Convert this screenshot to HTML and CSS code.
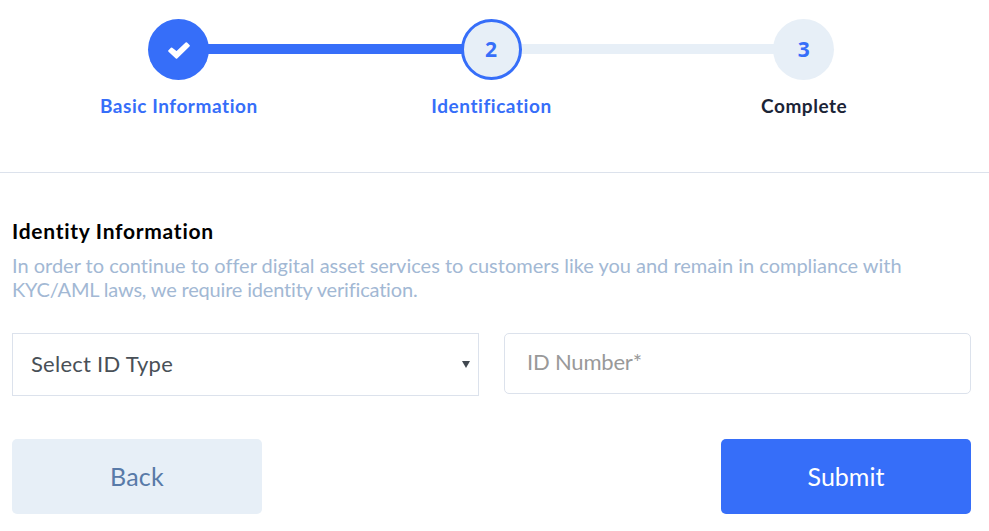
FILE: index.html
```html
<!DOCTYPE html>
<html lang="en">
<head>
    <meta charset="UTF-8">
    <title>Identity Verification</title>
    <link rel="stylesheet" href="styles.css">
</head>
<body>
    <ul class="steps">
        <li class="step done">
            <div class="step-track">
                <span class="step-line hidden"></span>
                <span class="step-circle">
                    <svg class="step-check" viewBox="0 0 22 17" width="22" height="17">
                        <path d="M1.2 8.9 3.6 6.5 8.5 10.4 18.3 1.2 20.8 3.8 8.5 15.7Z" fill="#fff" stroke="#fff" stroke-width="2" stroke-linejoin="round"/>
                    </svg>
                </span>
                <span class="step-line filled"></span>
            </div>
            <div class="step-label">Basic Information</div>
        </li>
        <li class="step active">
            <div class="step-track">
                <span class="step-line filled"></span>
                <span class="step-circle">2</span>
                <span class="step-line"></span>
            </div>
            <div class="step-label">Identification</div>
        </li>
        <li class="step">
            <div class="step-track">
                <span class="step-line"></span>
                <span class="step-circle">3</span>
                <span class="step-line hidden"></span>
            </div>
            <div class="step-label">Complete</div>
        </li>
    </ul>

    <form class="identity-form">
        <h2 class="section-title">Identity Information</h2>
        <p class="section-text">In order to continue to offer digital asset services to customers like you and remain in compliance with<br><span class="law-text">KYC/AML laws, we require identity verification.</span></p>

        <div class="fields">
            <div class="select-wrap">
                <select class="select" id="idType">
                    <option>Select ID Type</option>
                </select>
                <span class="select-arrow"></span>
            </div>
            <input class="input" id="idNumber" type="text" placeholder="ID Number*">
        </div>

        <div class="buttons">
            <button class="button back" type="button">Back</button>
            <button class="button submit" type="submit">Submit</button>
        </div>
    </form>
</body>
</html>
```

FILE: styles.css
```css
* {
    box-sizing: border-box;
}
body {
    font-family: Lato, "Liberation Sans", sans-serif;
    font-variant-ligatures: none;
    margin: 0;
    background-color: #fff;
}

.steps {
    list-style: none;
    display: flex;
    height: 173px;
    margin: 0;
    padding: 19px 29px 0 22px;
    border-bottom: 1px solid #dce2ec;
}
.step {
    flex: 1;
    color: #1b2437;
}
.step-track {
    display: flex;
    align-items: center;
}
.step-line {
    flex: 1;
    height: 10px;
    margin-bottom: 1px;
    background-color: #e7eff7;
}
.step-line.filled {
    background-color: #366ef9;
}
.step-line.hidden {
    visibility: hidden;
}
.step-circle {
    display: flex;
    align-items: center;
    justify-content: center;
    width: 61px;
    height: 61px;
    margin: 0 -1px;
    padding-bottom: 1px;
    border-radius: 50%;
    background-color: #e7eff7;
    color: #366ef9;
    font-family: "Open Sans", Lato, sans-serif;
    font-size: 21px;
    font-weight: bold;
    z-index: 1;
}
.step.done .step-circle {
    background-color: #366ef9;
}
.step.active .step-circle {
    border: 3px solid #366ef9;
}
.step-check {
    margin: 3px 0 0 1px;
}
.step-label {
    margin-top: 14px;
    padding-left: 1px;
    font-size: 19px;
    line-height: 24px;
    font-weight: bold;
    letter-spacing: 0.55px;
    text-align: center;
}
.step.done .step-label,
.step.active .step-label {
    color: #366ef9;
}

.identity-form {
    padding: 45px 18px 0 12px;
}
.section-title {
    margin: 0 0 9px;
    font-size: 21px;
    line-height: 26px;
    font-weight: bold;
    letter-spacing: 0.72px;
    color: #000;
}
.section-text {
    margin: 0 0 32px;
    font-size: 20px;
    line-height: 24px;
    letter-spacing: -0.01px;
    color: #a2b8d4;
    white-space: nowrap;
}
.law-text {
    letter-spacing: -0.18px;
}

.fields {
    display: grid;
    grid-template-columns: 1fr 1fr;
    align-items: start;
    gap: 25px;
}
.select-wrap {
    display: flex;
    align-items: center;
    height: 63px;
    padding: 0 8px 0 18px;
    border: 1px solid #dce2ec;
}
.select {
    flex: 1;
    height: 100%;
    padding: 0 0 2px;
    border: none;
    background: none;
    appearance: none;
    font-family: inherit;
    font-size: 22px;
    letter-spacing: 0.25px;
    color: #495057;
}
.select-arrow {
    border: 4px solid transparent;
    border-top: 7px solid #414850;
    border-bottom: none;
}
.input {
    width: 100%;
    height: 61px;
    padding: 0 22px 4px;
    border: 1px solid #dce2ec;
    border-radius: 5px;
    font-family: inherit;
    font-size: 22px;
    letter-spacing: -0.2px;
}
.input::placeholder {
    color: #999;
}

.buttons {
    display: flex;
    justify-content: space-between;
    margin-top: 43px;
}
.button {
    width: 250px;
    height: 75px;
    padding: 0 0 2px;
    border: none;
    border-radius: 5px;
    font-family: inherit;
    font-size: 25px;
    cursor: pointer;
}
.back {
    background-color: #e7eff7;
    color: #587aa8;
    letter-spacing: 0.3px;
}
.submit {
    background-color: #366ef9;
    color: #fff;
}
```
